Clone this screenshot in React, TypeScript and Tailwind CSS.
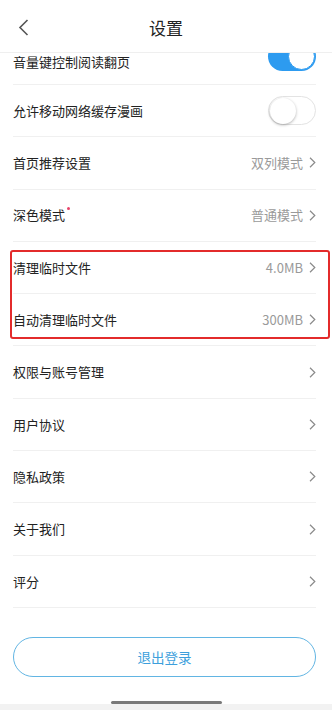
import React from "react";

const font = { fontFamily: '"Noto Sans CJK SC", "Noto Sans", sans-serif' };

function Chevron() {
  return (
    <svg width="7" height="11" viewBox="0 0 7 11" className="shrink-0">
      <path d="M1 0.8 L5.8 5.5 L1 10.2" fill="none" stroke="#8a8a8a" strokeWidth="1.2" />
    </svg>
  );
}

function Toggle({ on }: { on: boolean }) {
  return on ? (
    <div className="flex h-[29px] w-[48px] shrink-0 items-center justify-end rounded-full bg-[#2d9bf0] pr-[1px]">
      <div className="h-[27px] w-[27px] rounded-full border border-[#2d9bf0] bg-white" />
    </div>
  ) : (
    <div className="flex h-[29px] w-[48px] shrink-0 items-center rounded-full border border-[#e3e3e3] bg-white pl-[1px]">
      <div className="h-[26px] w-[26px] rounded-full bg-white shadow-[0_1px_3px_rgba(0,0,0,0.3)]" />
    </div>
  );
}

type Row = { label: string; value?: string; toggle?: boolean; dot?: boolean };

const rows: Row[] = [
  { label: "允许移动网络缓存漫画", toggle: false },
  { label: "首页推荐设置", value: "双列模式" },
  { label: "深色模式", value: "普通模式", dot: true },
  { label: "清理临时文件", value: "4.0MB" },
  { label: "自动清理临时文件", value: "300MB" },
  { label: "权限与账号管理" },
  { label: "用户协议" },
  { label: "隐私政策" },
  { label: "关于我们" },
  { label: "评分" },
];

export default function App() {
  return (
    <div className="relative flex h-[710px] w-[332px] flex-col overflow-hidden bg-white" style={font}>
      <div className="relative z-10 flex h-[53px] shrink-0 items-center justify-center border-b border-[#efefef] bg-white pt-[3px]">
        <svg width="11" height="17" viewBox="0 0 11 17" className="absolute left-[18px] top-[19px]">
          <path d="M9.5 1 L2 8.5 L9.5 16" fill="none" stroke="#555" strokeWidth="1.6" />
        </svg>
        <span className="text-[17px] text-[#222]">设置</span>
      </div>

      <div className="pl-[13px] pr-[16px]">
        {/* first row is scrolled half under the header */}
        <div className="flex h-[32px] items-start justify-between border-b border-[#f0f0f0]">
          <span className="mt-[1px] text-[13px] leading-[16px] text-[#222]">音量键控制阅读翻页</span>
          <div className="mt-[-11px]">
            <Toggle on={true} />
          </div>
        </div>
        {rows.map((r) => (
          <div key={r.label} className="flex h-[52.3px] items-center justify-between border-b border-[#f0f0f0]">
            <span className="relative text-[13px] text-[#222]">
              {r.label}
              {r.dot && <span className="absolute right-[-5px] top-[2px] h-[3px] w-[3px] rounded-full bg-[#e8446a]" />}
            </span>
            {r.toggle !== undefined ? (
              <Toggle on={r.toggle} />
            ) : (
              <div className="flex items-center gap-[6px]">
                {r.value && <span className="text-[13px] text-[#9a9a9a]">{r.value}</span>}
                <Chevron />
              </div>
            )}
          </div>
        ))}
      </div>

      <div className="mt-[29px] pl-[13px] pr-[16px]">
        <div className="flex h-[40px] items-center justify-center rounded-full border border-[#62b5e3]">
          <span className="text-[13.5px] text-[#3d9fdc]">退出登录</span>
        </div>
      </div>

      <div className="mt-auto flex h-[9px] flex-col">
        <div className="flex h-[3px] justify-center bg-white">
          <div className="h-[3px] w-[111px] rounded-full bg-[#7a7a7a]" />
        </div>
        <div className="flex-1 bg-[#f2f2f2]" />
      </div>

      <div className="pointer-events-none absolute left-[10px] top-[250px] h-[89px] w-[320px] rounded-[3px] border-[2.5px] border-[#e32b2b]" />
    </div>
  );
}
